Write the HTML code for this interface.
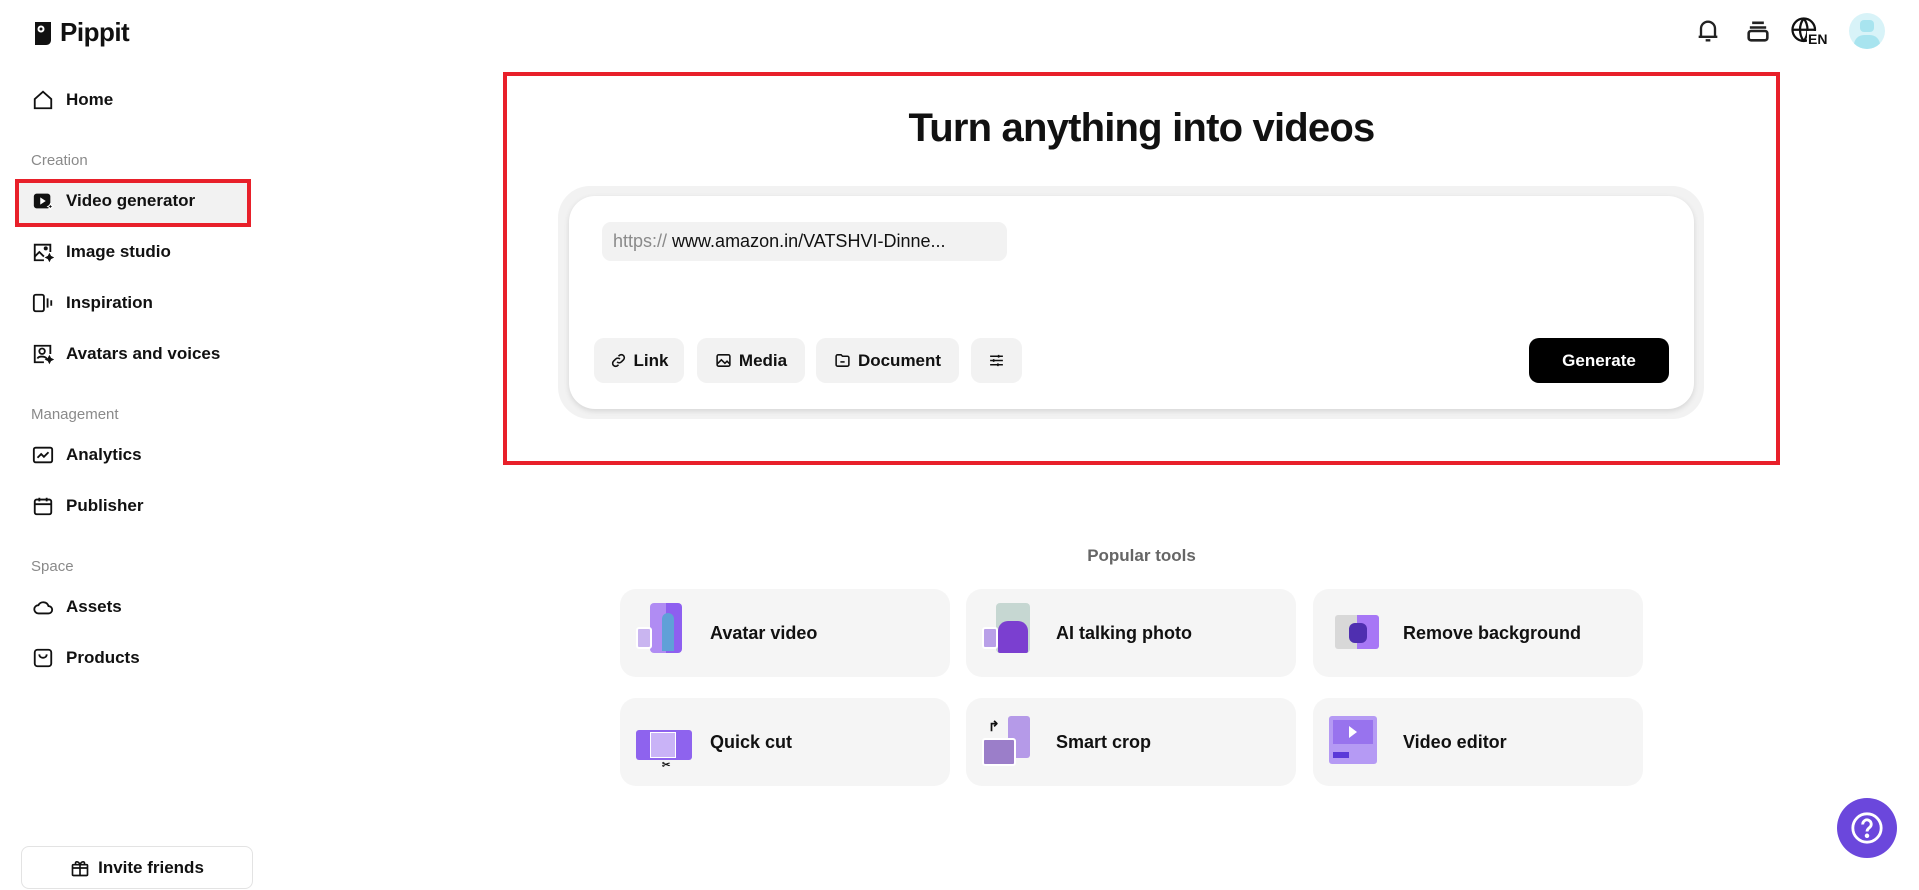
<!DOCTYPE html>
<html><head><meta charset="utf-8"><style>
*{box-sizing:border-box;margin:0;padding:0}
body{width:1919px;height:890px;background:#fff;font-family:"Liberation Sans",sans-serif;color:#111;position:relative;overflow:hidden}
.abs{position:absolute}
.logo{left:32px;top:17px;font-size:26px;font-weight:bold;display:flex;align-items:center;gap:6px;letter-spacing:-0.5px}
.nav{left:32px;font-size:17px;font-weight:bold;display:flex;align-items:center;gap:12px;height:24px}
.nav svg{width:22px;height:22px}
.sec{left:31px;font-size:15px;color:#8a8a8a}
.hl{left:15px;top:179px;width:236px;height:48px;border:4px solid #e8202a;background:#f2f2f2}
.invite{left:21px;top:846px;width:232px;height:43px;border:1px solid #e3e3e3;border-radius:8px;display:flex;align-items:center;justify-content:center;gap:8px;font-size:17px;font-weight:bold}
.redbox{left:503px;top:72px;width:1277px;height:393px;border:4px solid #e8202a}
.title{left:503px;width:1277px;top:106px;text-align:center;font-size:40px;font-weight:bold;letter-spacing:-0.8px}
.outer{left:558px;top:186px;width:1146px;height:233px;background:#f2f2f2;border-radius:32px}
.inner{left:569px;top:196px;width:1125px;height:213px;background:#fff;border-radius:26px;box-shadow:0 2px 6px rgba(0,0,0,.12)}
.chip{left:602px;top:222px;width:405px;height:39px;background:#f2f2f2;border-radius:9px;font-size:18px;display:flex;align-items:center;padding-left:11px;white-space:nowrap}
.btn{top:338px;height:45px;background:#f2f2f2;border-radius:10px;display:flex;align-items:center;justify-content:center;gap:7px;font-size:17px;font-weight:bold}
.btn svg{width:17px;height:17px}
.gen{left:1529px;top:338px;width:140px;height:45px;background:#000;color:#fff;border-radius:10px;display:flex;align-items:center;justify-content:center;font-size:17px;font-weight:bold}
.pop{left:503px;width:1277px;top:546px;text-align:center;font-size:17px;color:#666;font-weight:bold}
.card{height:88px;width:330px;background:#f5f5f5;border-radius:16px;display:flex;align-items:center;font-size:18px;font-weight:bold}
.card .ic{width:52px;height:60px;margin-left:16px;margin-right:22px;position:relative}
.help{left:1837px;top:798px;width:60px;height:60px;border-radius:50%;background:#6b47dc;display:flex;align-items:center;justify-content:center}
</style></head><body>
<div class="abs logo"><svg width="22" height="26" viewBox="0 0 22 26"><path d="M3 2h16v18c0 3-2 5-5 5H3z" fill="#111"/><circle cx="9" cy="9" r="3.5" fill="#fff"/><circle cx="9" cy="9" r="1.5" fill="#111"/></svg>Pippit</div>

<div class="abs hl"></div>
<div class="abs nav" style="top:88px"><svg viewBox="0 0 24 24" fill="none" stroke="#111" stroke-width="2"><path d="M3 11L12 3l9 8v10H3z"/></svg>Home</div>
<div class="abs sec" style="top:152px">Creation</div>
<div class="abs nav" style="top:189px"><svg viewBox="0 0 24 24"><rect x="2" y="4" width="18" height="16" rx="3" fill="#111"/><path d="M9 8l6 4-6 4z" fill="#fff"/><path d="M20 15l1 2 2 1-2 1-1 2-1-2-2-1 2-1z" fill="#111" stroke="#fff"/></svg>Video generator</div>
<div class="abs nav" style="top:240px"><svg viewBox="0 0 24 24" fill="none" stroke="#111" stroke-width="2"><path d="M20 12V4H3v17h10"/><path d="M3 17l5-5 5 5"/><circle cx="15" cy="8" r="1.2" fill="#111"/><path d="M19 15l1 2 2 1-2 1-1 2-1-2-2-1 2-1z" fill="#111"/></svg>Image studio</div>
<div class="abs nav" style="top:291px"><svg viewBox="0 0 24 24" fill="none" stroke="#111" stroke-width="2"><rect x="2" y="3" width="11" height="18" rx="2"/><path d="M17 7v10M21 9v6"/></svg>Inspiration</div>
<div class="abs nav" style="top:342px"><svg viewBox="0 0 24 24" fill="none" stroke="#111" stroke-width="2"><path d="M20 12V3H3v18h10"/><circle cx="11" cy="9" r="3"/><path d="M6 17c1-3 8-3 10 0"/><path d="M19 15l1 2 2 1-2 1-1 2-1-2-2-1 2-1z" fill="#111"/></svg>Avatars and voices</div>
<div class="abs sec" style="top:406px">Management</div>
<div class="abs nav" style="top:443px"><svg viewBox="0 0 24 24" fill="none" stroke="#111" stroke-width="2"><rect x="2" y="4" width="20" height="16" rx="2"/><path d="M6 15l4-4 3 3 5-5"/></svg>Analytics</div>
<div class="abs nav" style="top:494px"><svg viewBox="0 0 24 24" fill="none" stroke="#111" stroke-width="2"><rect x="3" y="5" width="18" height="16" rx="2"/><path d="M3 10h18M8 3v4M16 3v4"/></svg>Publisher</div>
<div class="abs sec" style="top:558px">Space</div>
<div class="abs nav" style="top:595px"><svg viewBox="0 0 24 24" fill="none" stroke="#111" stroke-width="2"><path d="M7 19h11a4 4 0 000-8 6 6 0 00-11-1 4.5 4.5 0 000 9z"/></svg>Assets</div>
<div class="abs nav" style="top:646px"><svg viewBox="0 0 24 24" fill="none" stroke="#111" stroke-width="2"><rect x="3" y="3" width="18" height="18" rx="3"/><path d="M8 8c0 5 8 5 8 0"/></svg>Products</div>
<div class="abs invite"><svg width="20" height="20" viewBox="0 0 24 24" fill="none" stroke="#111" stroke-width="2"><rect x="3" y="8" width="18" height="13" rx="1"/><path d="M3 12h18M12 8v13M12 8c-2-5-7-4-5 0M12 8c2-5 7-4 5 0"/></svg>Invite friends</div>

<svg class="abs" style="left:1694px;top:17px" width="28" height="28" viewBox="0 0 24 24" fill="none" stroke="#222" stroke-width="2"><path d="M6 17V10a6 6 0 0112 0v7M4 17h16M10 20h4"/></svg>
<svg class="abs" style="left:1744px;top:17px" width="28" height="28" viewBox="0 0 24 24" fill="none" stroke="#222" stroke-width="2.2"><path d="M7 5h10M5 9h14"/><rect x="4" y="12" width="16" height="8" rx="2"/></svg>
<div class="abs" style="left:1790px;top:16px;width:40px;height:34px"><svg width="30" height="30" viewBox="0 0 24 24" fill="none" stroke="#111" stroke-width="1.8"><circle cx="11" cy="11" r="9"/><path d="M2 11h18M11 2c-4 5-4 13 0 18M11 2c4 5 4 13 0 18"/></svg><span style="position:absolute;left:17px;top:15px;font-size:14px;font-weight:bold;background:#fff;padding:0 1px">EN</span></div>
<div class="abs" style="left:1849px;top:13px;width:36px;height:36px;border-radius:50%;background:#d8f3f8;overflow:hidden"><div style="position:absolute;left:11px;top:7px;width:14px;height:12px;background:#a8e4ef;border-radius:4px"></div><div style="position:absolute;left:5px;top:22px;width:26px;height:20px;background:#a8e4ef;border-radius:12px"></div></div>

<div class="abs redbox"></div>
<div class="abs title">Turn anything into videos</div>
<div class="abs outer"></div>
<div class="abs inner"></div>
<div class="abs chip"><span style="color:#8a8a8a">https://</span>&nbsp;<span>www.amazon.in/VATSHVI-Dinne...</span></div>
<div class="abs btn" style="left:594px;width:90px"><svg viewBox="0 0 24 24" fill="none" stroke="#111" stroke-width="2.2"><path d="M10 14a4 4 0 006 0l3-3a4 4 0 00-6-6l-1 1M14 10a4 4 0 00-6 0l-3 3a4 4 0 006 6l1-1"/></svg>Link</div>
<div class="abs btn" style="left:697px;width:108px"><svg viewBox="0 0 24 24" fill="none" stroke="#111" stroke-width="2.2"><rect x="3" y="4" width="18" height="16" rx="2"/><path d="M3 17l6-6 5 5 3-3 4 4"/></svg>Media</div>
<div class="abs btn" style="left:816px;width:143px"><svg viewBox="0 0 24 24" fill="none" stroke="#111" stroke-width="2.2"><path d="M3 6a2 2 0 012-2h5l2 2h7a2 2 0 012 2v10a2 2 0 01-2 2H5a2 2 0 01-2-2z"/><path d="M9 14h6"/></svg>Document</div>
<div class="abs btn" style="left:971px;width:51px"><svg viewBox="0 0 24 24" fill="none" stroke="#111" stroke-width="2.2"><path d="M3 6h18M3 12h18M3 18h18"/><path d="M15 4v4M8 10v4M14 16v4"/></svg></div>
<div class="abs gen">Generate</div>

<div class="abs pop">Popular tools</div>
<div class="abs card" style="left:620px;top:589px"><div class="ic"><div style="position:absolute;left:14px;top:0;width:32px;height:50px;background:linear-gradient(90deg,#b08cf3 50%,#8e5ff0 50%);border-radius:4px"></div><div style="position:absolute;left:0;top:24px;width:16px;height:22px;background:#c9b5f0;border:2px solid #fff;border-radius:3px"></div><div style="position:absolute;left:26px;top:10px;width:12px;height:38px;background:#5fa0d8;border-radius:6px 6px 0 0"></div></div>Avatar video</div>
<div class="abs card" style="left:966px;top:589px"><div class="ic"><div style="position:absolute;left:14px;top:0;width:34px;height:50px;background:#c6d7d2;border-radius:4px"></div><div style="position:absolute;left:16px;top:18px;width:30px;height:32px;background:#7b3fd0;border-radius:10px 10px 2px 2px"></div><div style="position:absolute;left:0;top:24px;width:16px;height:22px;background:#b9a0e8;border:2px solid #fff;border-radius:3px"></div></div>AI talking photo</div>
<div class="abs card" style="left:1313px;top:589px"><div class="ic"><div style="position:absolute;left:6px;top:12px;width:44px;height:34px;background:linear-gradient(90deg,#d8d8d8 50%,#a777f6 50%);border-radius:3px"></div><div style="position:absolute;left:20px;top:20px;width:18px;height:20px;background:#4f2fb0;border-radius:6px"></div></div>Remove background</div>
<div class="abs card" style="left:620px;top:698px"><div class="ic"><div style="position:absolute;left:0;top:18px;width:56px;height:30px;background:#8e63ee;border-radius:3px"></div><div style="position:absolute;left:14px;top:20px;width:26px;height:26px;background:#c9b3f7;border:1px solid #fff"></div><div style="position:absolute;left:26px;top:48px;font-size:10px">✂</div></div>Quick cut</div>
<div class="abs card" style="left:966px;top:698px"><div class="ic"><div style="position:absolute;left:26px;top:4px;width:22px;height:42px;background:#b59ae8;border-radius:3px"></div><div style="position:absolute;left:0;top:26px;width:34px;height:28px;background:#9b7ec9;border:2px solid #fff;border-radius:3px"></div><div style="position:absolute;left:6px;top:6px;font-size:14px">↱</div></div>Smart crop</div>
<div class="abs card" style="left:1313px;top:698px"><div class="ic"><div style="position:absolute;left:0;top:4px;width:48px;height:48px;background:#b59af4;border-radius:3px"></div><div style="position:absolute;left:4px;top:8px;width:40px;height:24px;background:#9873ee"></div><div style="position:absolute;left:20px;top:14px;width:0;height:0;border-left:8px solid #fff;border-top:6px solid transparent;border-bottom:6px solid transparent"></div><div style="position:absolute;left:4px;top:40px;width:16px;height:6px;background:#5b3ad8"></div></div>Video editor</div>

<div class="abs help"><svg width="34" height="34" viewBox="0 0 24 24" fill="none" stroke="#fff" stroke-width="2"><circle cx="12" cy="12" r="10"/><path d="M9 9.5a3 3 0 115 2c-1 .8-2 1.3-2 3"/><circle cx="12" cy="17.5" r=".6" fill="#fff"/></svg></div>
</body></html>
